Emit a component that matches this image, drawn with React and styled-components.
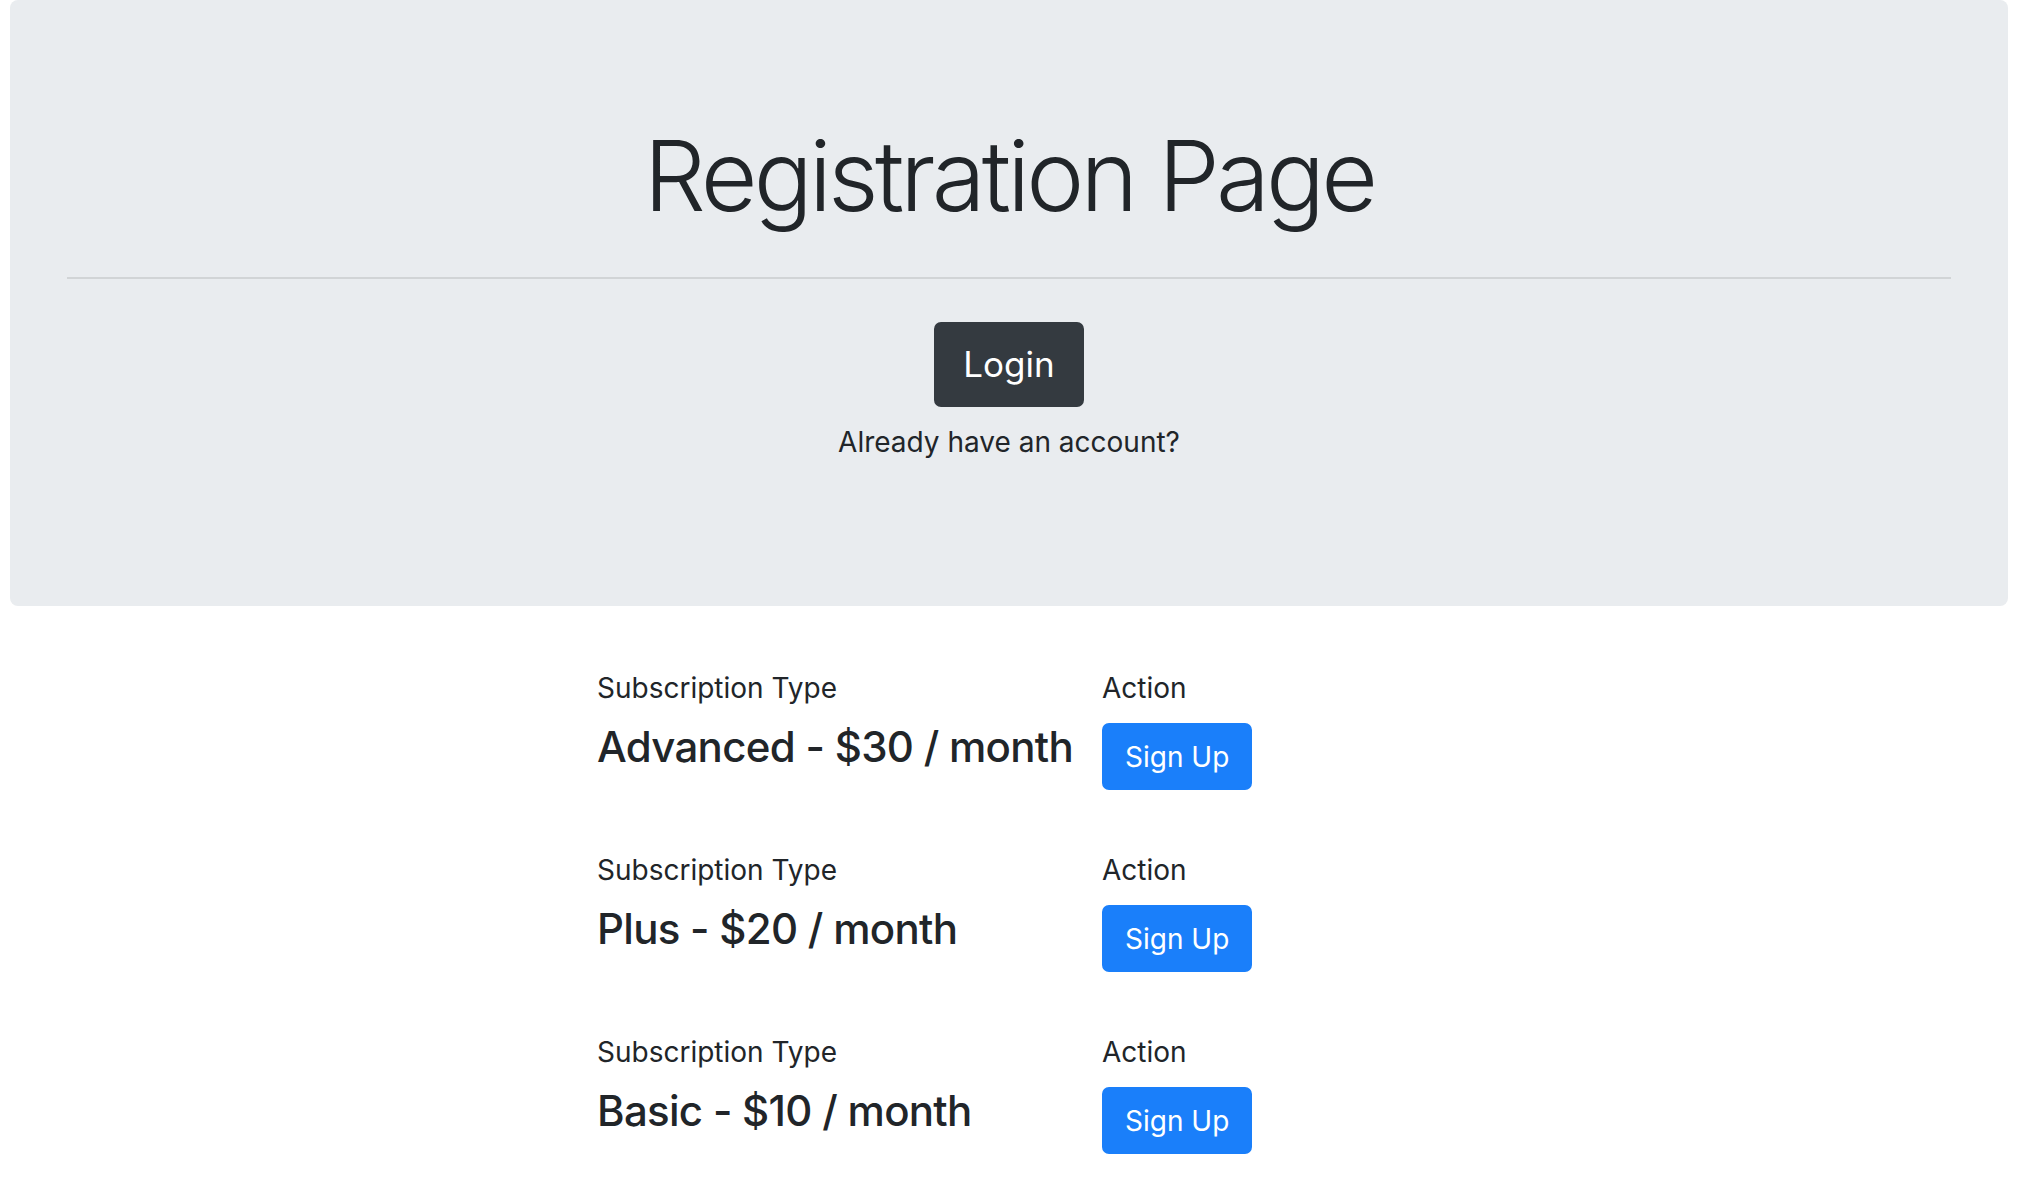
import styled, { createGlobalStyle } from "styled-components";

const GlobalStyle = createGlobalStyle`
  body {
    margin: 0;
    background: #fff;
    color: #212529;
    font-family: Inter, "Noto Sans", "Liberation Sans", sans-serif;
    font-size: 28px;
    line-height: 1.5;
  }
`;

const Page = styled.div`
  padding: 0 10px 40px;
`;

const Jumbotron = styled.header`
  background: #e9ecef;
  border-radius: 8px;
  padding: 117px 57px 113px;
  text-align: center;
`;

const Title = styled.h1`
  margin: 0;
  font-size: 98px;
  font-weight: 300;
  line-height: 1.2;
  letter-spacing: -3.8px;
`;

const Rule = styled.hr`
  margin: 42px 0 43px;
  border: 0;
  border-top: 2px solid rgba(0, 0, 0, 0.1);
`;

const Button = styled.button`
  font-family: inherit;
  color: #fff;
  background: ${(p) => (p.$variant === "dark" ? "#343a40" : "#1a7ffa")};
  border: 2px solid ${(p) => (p.$variant === "dark" ? "#343a40" : "#1a7ffa")};
  border-radius: 7px;
  font-size: ${(p) => (p.$large ? "35px" : "28px")};
  line-height: 1.5;
  padding: ${(p) => (p.$large ? "14.5px 27px" : "10.5px 21px")};
  cursor: pointer;
`;

const Note = styled.p`
  margin: 14px 0 30px;
`;

const Plans = styled.section`
  display: flex;
  flex-direction: column;
  gap: 59px;
  padding: 61px 0 0 587px;
`;

const Plan = styled.div`
  display: grid;
  grid-template-columns: 505px auto;
`;

const Column = styled.div`
  display: flex;
  flex-direction: column;
  align-items: flex-start;
`;

const Label = styled.div`
  margin-bottom: 14px;
`;

const Price = styled.h4`
  margin: -1px 0 0;
  font-size: 42px;
  font-weight: 500;
  line-height: 1.2;
  letter-spacing: -0.7px;
  white-space: nowrap;
`;

const plans = [
  { name: "Advanced", price: 30 },
  { name: "Plus", price: 20 },
  { name: "Basic", price: 10 },
];

export default function App() {
  return (
    <Page>
      <GlobalStyle />
      <Jumbotron>
        <Title>Registration Page</Title>
        <Rule />
        <Button $variant="dark" $large>
          Login
        </Button>
        <Note>Already have an account?</Note>
      </Jumbotron>

      <Plans>
        {plans.map((p) => (
          <Plan key={p.name}>
            <Column>
              <Label>Subscription Type</Label>
              <Price>
                {p.name} - ${p.price} / month
              </Price>
            </Column>
            <Column>
              <Label>Action</Label>
              <Button>Sign Up</Button>
            </Column>
          </Plan>
        ))}
      </Plans>
    </Page>
  );
}
